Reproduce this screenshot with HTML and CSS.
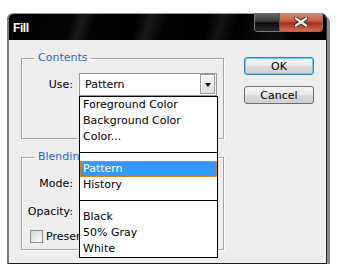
FILE: index.html
```html
<!DOCTYPE html>
<html lang="en">
<head>
  <meta charset="UTF-8">
  <title>Fill</title>
  <link rel="stylesheet" href="styles.css">
</head>
<body>
  <div class="window">
    <div class="titlebar">
      <span class="title">Fill</span>
      <div class="caption-buttons">
        <span class="cap-btn cap-dark"></span>
        <span class="cap-btn cap-close">
          <svg width="14" height="10" viewBox="0 0 14 10">
            <path d="M2 1.5 L12 8.5 M12 1.5 L2 8.5" stroke="#3a2a28" stroke-width="4" stroke-linecap="square"/>
            <path d="M2 1.5 L12 8.5 M12 1.5 L2 8.5" stroke="#f4f4f4" stroke-width="2.2" stroke-linecap="square"/>
          </svg>
        </span>
      </div>
    </div>

    <div class="client">
      <div class="groups">
        <fieldset class="group group-contents">
          <legend>Contents</legend>
          <div class="row">
            <label class="field-label">Use:</label>
            <div class="select">
              <span class="select-value">Pattern</span>
              <span class="select-arrow"></span>
            </div>
          </div>
        </fieldset>

        <fieldset class="group group-blending">
          <legend>Blending</legend>
          <div class="row">
            <label class="field-label">Mode:</label>
            <div class="select"></div>
          </div>
          <div class="row row-second">
            <label class="field-label">Opacity:</label>
            <div class="text-input"></div>
          </div>
          <div class="check-row">
            <span class="checkbox"></span>
            <span class="check-label">Preserve Transparency</span>
          </div>
        </fieldset>
      </div>

      <div class="buttons">
        <button class="btn btn-default">OK</button>
        <button class="btn">Cancel</button>
      </div>
    </div>

    <ul class="dropdown">
      <li>Foreground Color</li>
      <li>Background Color</li>
      <li>Color...</li>
      <li class="separator"></li>
      <li class="selected">Pattern</li>
      <li>History</li>
      <li class="separator"></li>
      <li>Black</li>
      <li>50% Gray</li>
      <li>White</li>
    </ul>
  </div>
</body>
</html>
```

FILE: styles.css
```css
body {
  margin: 0;
  background: #ffffff;
  font-family: "DejaVu Sans", sans-serif;
  font-size: 11px;
  color: #000;
}
.window {
  position: relative;
  margin: 13px 0 0 7px;
  width: 317px;
  border-left: 2px solid #7c7c7c;
  border-right: 1px solid #2a2a2a;
  border-bottom: 1px solid #1a1a1a;
  border-radius: 6px 6px 0 0;
  box-shadow: 3px 3px 0 #8a8a8a;
}
.titlebar {
  display: flex;
  justify-content: space-between;
  height: 27px;
  box-sizing: border-box;
  border-top: 1px solid #9a9a9a;
  border-radius: 5px 5px 0 0;
  background: linear-gradient(108deg, #000 0%, #050505 20%, #1a1a1a 23%, #030303 27%, #000 40%, #191919 44%, #020202 49%, #000 62%, #141414 66%, #000 71%, #101010 85%, #000 90%);
}
.title {
  padding: 7px 0 0 4px;
  font-family: "Liberation Sans", sans-serif;
  font-weight: bold;
  font-size: 12px;
  letter-spacing: -0.4px;
  color: #fff;
}
.caption-buttons {
  display: flex;
  margin-right: 3px;
  margin-top: -1px;
  height: 18px;
  border: 1px solid #777;
  border-top: none;
  border-radius: 0 0 4px 4px;
  overflow: hidden;
}
.cap-btn {
  display: flex;
  align-items: center;
  justify-content: center;
}
.cap-dark {
  width: 24px;
  border-right: 1px solid #555;
  background: linear-gradient(#6a6a6a, #3a3a3a 45%, #0c0c0c 55%, #2a2a2a);
}
.cap-close {
  width: 42px;
  background: linear-gradient(#d88a78, #c85a44 45%, #a82e18 55%, #d4684c);
}
.client {
  display: flex;
  align-items: flex-start;
  height: 223px;
  box-sizing: border-box;
  padding: 11px 0 0 12px;
  background: #eeeeee;
}
.group {
  box-sizing: border-box;
  width: 203px;
  margin: 0;
  border: 1px solid #a3a3a3;
  box-shadow: inset 1px 1px 0 #fff, 1px 1px 0 #fff;
  padding: 8px 0 0 0;
}
.group legend {
  margin-left: 12px;
  padding: 0 4px;
  line-height: 14px;
  color: #1d66d2;
}
.group-contents {
  padding-bottom: 42px;
}
.group-blending {
  margin-top: 11px;
  padding-bottom: 6px;
}
.row {
  display: flex;
  align-items: center;
  height: 23px;
}
.row-second {
  margin-top: 5px;
}
.field-label {
  width: 51px;
  margin-right: 6px;
  text-align: right;
}
.select {
  position: relative;
  box-sizing: border-box;
  width: 138px;
  height: 23px;
  display: flex;
  align-items: center;
  border: 1px solid #9a9a9a;
  background: #fff;
  padding-left: 5px;
}
.select-value {
  flex: 1;
}
.select-arrow {
  position: relative;
  box-sizing: border-box;
  width: 15px;
  height: 20px;
  margin: 0 1px 1px 0;
  border: 1px solid #9a9a9a;
  box-shadow: inset 1px 1px 0 #fff;
  background: linear-gradient(#f6f6f6, #dedede);
}
.select-arrow::after {
  content: "";
  position: absolute;
  left: 4px;
  top: 8px;
  border-left: 3px solid transparent;
  border-right: 3px solid transparent;
  border-top: 4px solid #000;
}
.text-input {
  box-sizing: border-box;
  width: 50px;
  height: 21px;
  border: 1px solid #9a9a9a;
  background: #fff;
}
.check-row {
  display: flex;
  align-items: center;
  gap: 3px;
  width: 49px;
  height: 13px;
  margin: 7px 0 0 8px;
  overflow: hidden;
}
.checkbox {
  flex: none;
  box-sizing: border-box;
  width: 13px;
  height: 13px;
  border: 1px solid #8c8d8d;
  background: linear-gradient(135deg, #d4d4d4, #fafafa);
}
.check-label {
  white-space: nowrap;
}
.buttons {
  display: flex;
  flex-direction: column;
  gap: 11px;
  margin: 6px 0 0 20px;
}
.btn {
  box-sizing: border-box;
  width: 70px;
  height: 18px;
  padding: 0;
  font-family: "DejaVu Sans", sans-serif;
  font-size: 11px;
  color: #000;
  border: 1px solid #707070;
  border-radius: 3px;
  background: linear-gradient(#f4f4f4, #eaeaea 50%, #dcdcdc 51%, #cfcfcf);
}
.btn-default {
  border-color: #3c7fb1;
  box-shadow: inset 0 0 0 1px #6bd0f3;
}
.dropdown {
  position: absolute;
  left: 70px;
  top: 83px;
  width: 137px;
  margin: 0;
  padding: 0;
  list-style: none;
  border: 1px solid #000;
  background: #fff;
}
.dropdown li {
  box-sizing: border-box;
  height: 16px;
  line-height: 16px;
  padding-left: 3px;
  white-space: nowrap;
  overflow: hidden;
}
.dropdown .separator {
  position: relative;
}
.dropdown .separator::after {
  content: "";
  position: absolute;
  left: 0;
  right: 0;
  top: 7px;
  border-top: 1px solid #000;
}
.dropdown .selected {
  background: #3399ff;
  color: #fff;
  outline: 1px dotted #e08a20;
  outline-offset: -1px;
}
```
